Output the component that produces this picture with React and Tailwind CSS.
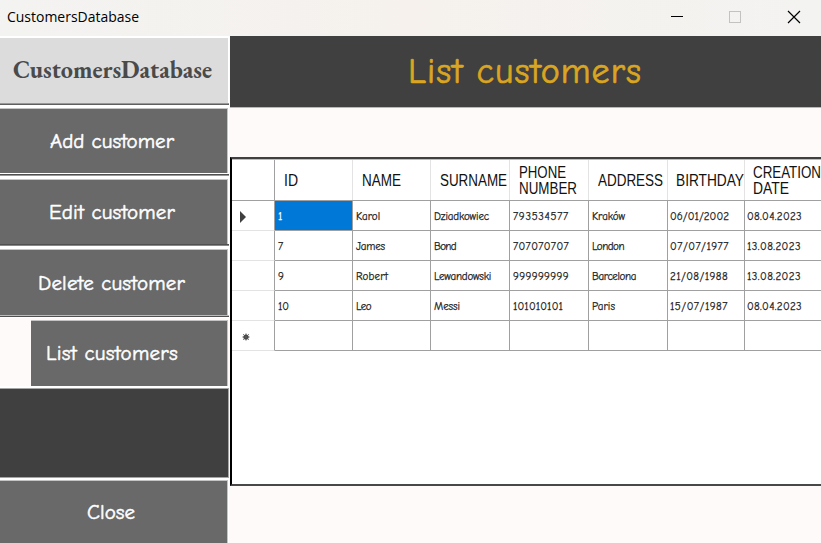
import { useLayoutEffect, useRef } from "react";

// Sets a run of text to an exact width, by tracking or by condensing the glyphs.
function Fit({ children, width, condense = false, className = "" }) {
  const ref = useRef(null);
  useLayoutEffect(() => {
    const el = ref.current;
    el.style.letterSpacing = "";
    el.style.transform = "";
    const natural = el.getBoundingClientRect().width;
    if (condense) {
      el.style.transform = `scaleX(${width / natural})`;
    } else {
      el.style.letterSpacing = `${(width - natural) / children.length}px`;
    }
  }, [children, width, condense]);
  return (
    <span ref={ref} className={`inline-block origin-left whitespace-pre ${className}`}>
      {children}
    </span>
  );
}

const comic = "font-['Comic_Sans_MS','Comic_Neue',Lato,sans-serif]";

const columns = [
  { head: "pl-[9px]", cell: "pl-[3px]", lines: [["ID", 14]] },
  { head: "pl-[9px]", cell: "pl-[3px]", lines: [["NAME", 39]] },
  { head: "pl-[9px]", cell: "pl-[3px]", lines: [["SURNAME", 67]] },
  { head: "pl-[9px]", cell: "pl-[3px]", lines: [["PHONE", 47], ["NUMBER", 58]] },
  { head: "pl-[9px]", cell: "pl-[3px]", lines: [["ADDRESS", 65]] },
  { head: "pl-[8px]", cell: "pl-[2px]", lines: [["BIRTHDAY", 68]] },
  { head: "pl-[8px]", cell: "pl-[2px]", lines: [["CREATION", 68], ["DATE", 36]] },
];

const rows = [
  [["1", 5], ["Karol", 24], ["Dziadkowiec", 55], ["793534577", 56], ["Kraków", 33], ["06/01/2002", 59], ["08.04.2023", 55]],
  [["7", 6], ["James", 29], ["Bond", 22], ["707070707", 56], ["London", 32], ["07/07/1977", 59], ["13.08.2023", 54]],
  [["9", 6], ["Robert", 32], ["Lewandowski", 57], ["999999999", 56], ["Barcelona", 44], ["21/08/1988", 58], ["13.08.2023", 54]],
  [["10", 11], ["Leo", 15], ["Messi", 26], ["101010101", 50], ["Paris", 23], ["15/07/1987", 58], ["08.04.2023", 55]],
  null,
];

const grid = "grid grid-cols-[43px_78px_78px_79px_79px_79px_77px_79px]";

function NavButton({ label, width, className }) {
  return (
    <div className={`flex items-center border-r border-[#c4c4c4] bg-[#696969] text-[21px] leading-none text-white [-webkit-text-stroke:0.5px_#fff] ${comic} ${className}`}>
      <Fit width={width}>{label}</Fit>
    </div>
  );
}

function TitleBar() {
  return (
    <header className="flex h-9 items-center bg-gradient-to-r from-[#f3f3f1] via-[#f6f1ed] to-[#f3f3f1] pl-[7px]">
      <Fit width={132} condense className="-mt-[5px] font-['Segoe_UI','Open_Sans',sans-serif] text-[15px] leading-5 text-black">
        CustomersDatabase
      </Fit>
      <svg className="ml-auto" width="150" height="36" fill="none" shapeRendering="crispEdges">
        <path d="M0 16.5h12" stroke="#000" />
        <rect x="58.5" y="11.5" width="11" height="11" rx="1" stroke="#c2c2c2" />
        <path d="M117 11l12 12M129 11l-12 12" stroke="#000" strokeWidth="1.2" shapeRendering="auto" />
      </svg>
    </header>
  );
}

function Sidebar() {
  return (
    <aside className="flex w-[229px] shrink-0 flex-col bg-white">
      <div className="mr-px mt-[2px] flex h-[65px] items-center bg-[#dcdcdc] pl-[13px]">
        <Fit width={199} condense className="-mt-[2px] font-[Garamond,'EB_Garamond','Liberation_Serif',serif] text-[24px] font-bold leading-none text-[#4a4a4a]">
          CustomersDatabase
        </Fit>
      </div>
      <div className="h-[2px] border-t border-[#999] bg-[#606060]" />
      <NavButton label="Add customer" width={124} className="mr-px mt-[3px] h-[65px] border-t pl-[50px]" />
      <div className="mt-px h-[2px] border-b border-[#999] bg-[#505050]" />
      <NavButton label="Edit customer" width={126} className="mr-px mt-[3px] h-[65px] border-t pl-[49px]" />
      <div className="h-[2px] border-b border-[#888] bg-[#505050]" />
      <NavButton label="Delete customer" width={147} className="mr-px mt-[3px] h-[66px] border-t pl-[38px] pt-px" />
      <div className="h-[2px] border-t border-[#bbb] bg-[#505050]" />
      <div className="mt-px flex bg-[#fffafa] pt-[2px]">
        <NavButton label="List customers" width={132} className="ml-[31px] mr-px h-[66px] flex-1 border-t pl-[15px]" />
      </div>
      <div className="mt-[2px] h-[90px] border-y border-r border-[#a5a5a5] bg-[#404040]" />
      <NavButton label="Close" width={48} className="mr-px mt-[2px] flex-1 border-t pl-[87px]" />
    </aside>
  );
}

function CustomerTable() {
  return (
    <div className="mt-[49px] h-[329px] overflow-hidden border-2 border-r-0 border-b-[#484848] border-l-black border-t-[#404040] bg-white">
      <div className="w-[592px] border-t border-[#bdbdbd]">
        <div className={`${grid} h-[41px] border-b border-[#a0a0a0] font-['Liberation_Sans',sans-serif] text-[16px] leading-4 text-[#111]`}>
          <div className="border-r border-[#a0a0a0]" />
          {columns.map((column, i) => (
            <div key={i} className={`flex flex-col items-start justify-center border-r border-[#e3e3e3] pt-[2px] ${column.head}`}>
              {column.lines.map(([text, width]) => (
                <Fit key={text} width={width} condense>{text}</Fit>
              ))}
            </div>
          ))}
        </div>
        {rows.map((row, r) => (
          <div key={r} className={`${grid} h-[30px] text-[11px] leading-none text-[#222] [-webkit-text-stroke:0.25px_currentColor] ${comic}`}>
            <div className="flex items-center border-b border-r border-b-[#e3e3e3] border-r-[#a0a0a0] pl-[7px]">
              {r === 0 && (
                <svg width="8" height="12" className="mt-[2px]"><path d="M1 0l6 6-6 6z" fill="#404040" /></svg>
              )}
              {r === 4 && (
                <svg width="8" height="8" className="ml-[3px] mt-[3px]" stroke="#555" strokeWidth="1">
                  <circle cx="4" cy="4" r="2.6" fill="#404040" stroke="none" />
                  <path d="M4 .5v7M.5 4h7M1.3 1.3l5.4 5.4M6.7 1.3l-5.4 5.4" />
                </svg>
              )}
            </div>
            {columns.map((column, c) => (
              <div
                key={c}
                className={`flex items-center border-b border-r border-[#a0a0a0] pt-[2px] ${column.cell} ${r === 0 && c === 0 ? "bg-[#0078d7] text-white" : ""}`}
              >
                {row && <Fit width={row[c][1]}>{row[c][0]}</Fit>}
              </div>
            ))}
          </div>
        ))}
      </div>
    </div>
  );
}

export default function App() {
  return (
    <div className="flex h-[543px] w-[821px] flex-col overflow-hidden bg-[#fffafa]">
      <TitleBar />
      <div className="flex min-h-0 flex-1">
        <Sidebar />
        <main className="ml-px min-w-0 flex-1">
          <div className={`flex h-[72px] items-center border-b border-[#b8b8b8] bg-[#404040] pl-[178px] text-[36px] leading-none text-[#daa520] [-webkit-text-stroke:0.7px_#daa520] ${comic}`}>
            <Fit width={234}>List customers</Fit>
          </div>
          <CustomerTable />
        </main>
      </div>
    </div>
  );
}
